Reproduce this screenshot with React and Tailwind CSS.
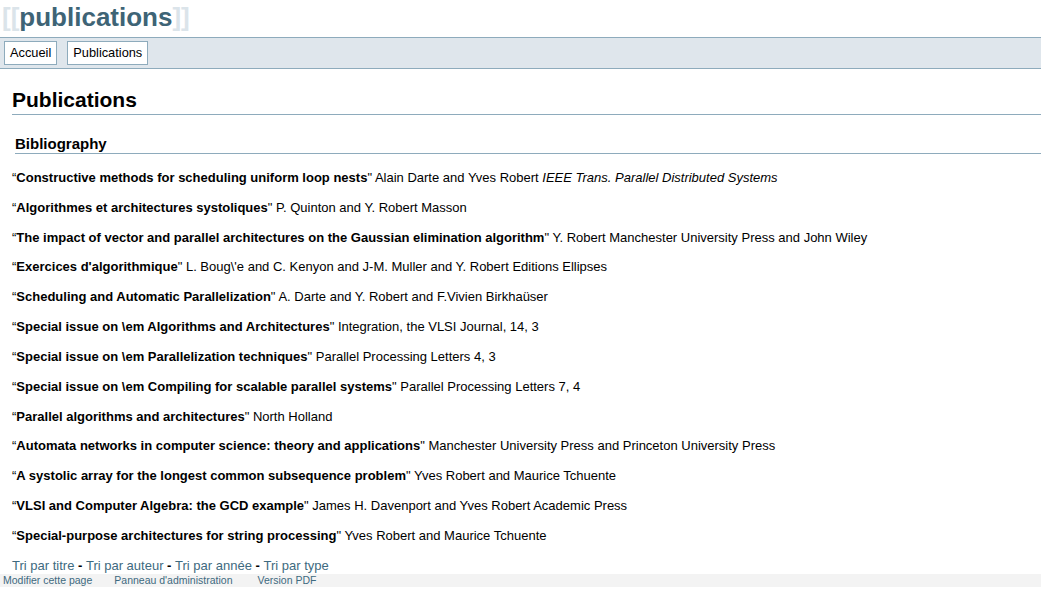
import React from "react";

const entries = [
  ["Constructive methods for scheduling uniform loop nests", " Alain Darte and Yves Robert ", "IEEE Trans. Parallel Distributed Systems"],
  ["Algorithmes et architectures systoliques", " P. Quinton and Y. Robert Masson"],
  ["The impact of vector and parallel architectures on the Gaussian elimination algorithm", " Y. Robert Manchester University Press and John Wiley"],
  ["Exercices d'algorithmique", " L. Boug\\'e and C. Kenyon and J-M. Muller and Y. Robert Editions Ellipses"],
  ["Scheduling and Automatic Parallelization", " A. Darte and Y. Robert and F.Vivien Birkhaüser"],
  ["Special issue on \\em Algorithms and Architectures", " Integration, the VLSI Journal, 14, 3"],
  ["Special issue on \\em Parallelization techniques", " Parallel Processing Letters 4, 3"],
  ["Special issue on \\em Compiling for scalable parallel systems", " Parallel Processing Letters 7, 4"],
  ["Parallel algorithms and architectures", " North Holland"],
  ["Automata networks in computer science: theory and applications", " Manchester University Press and Princeton University Press"],
  ["A systolic array for the longest common subsequence problem", " Yves Robert and Maurice Tchuente"],
  ["VLSI and Computer Algebra: the GCD example", " James H. Davenport and Yves Robert Academic Press"],
  ["Special-purpose architectures for string processing", " Yves Robert and Maurice Tchuente"],
];

export default function App() {
  return (
    <div className="w-[1041px] h-[603px] bg-white text-black overflow-hidden" style={{ fontFamily: '"Liberation Sans", Arial, sans-serif' }}>
      <div className="h-[37px] pt-[2px] pl-[2px] text-[26px] leading-[30px] font-bold text-[#3e6476]">
        <span className="text-[#dbe4ea]">[[</span>publications<span className="text-[#dbe4ea]">]]</span>
      </div>
      <div className="h-[32px] border-y border-[#8eabbc] bg-[#dfe6ec] pt-[3px] pl-[4px] flex gap-[10px]">
        <span className="h-[24px] border border-[#8eabbc] bg-white px-[5px] text-[12.8px] leading-[22px]">Accueil</span>
        <span className="h-[24px] border border-[#8eabbc] bg-white px-[5px] text-[12.8px] leading-[22px]">Publications</span>
      </div>
      <div className="pl-[12px]">
        <h1 className="mt-[20px] text-[21px] leading-[22px] font-bold pb-[3px] border-b border-[#8eabbc]">Publications</h1>
        <h2 className="mt-[21px] ml-[3px] text-[15px] leading-[15px] pb-[2px] font-bold border-b border-[#8eabbc]">Bibliography</h2>
        <div className="pt-[2px]">
          {entries.map((e, i) => (
            <p key={i} className="mt-[15px] text-[13px] leading-[14.83px] whitespace-nowrap">
              “<b>{e[0]}</b>"{e[1]}
              {e[2] && <i>{e[2]}</i>}
            </p>
          ))}
        </div>
        <div className="mt-[14.5px] text-[13px] leading-[15px] text-[#3e6a80] whitespace-nowrap">
          <span>Tri par titre</span>
          <b className="text-black"> - </b>
          <span>Tri par auteur</span>
          <b className="text-black"> - </b>
          <span>Tri par année</span>
          <b className="text-black"> - </b>
          <span>Tri par type</span>
        </div>
      </div>
      <div className="mt-[1px] h-[13px] bg-[#f3f3f3] pl-[3px] flex text-[10.5px] leading-[13px] text-[#3e6a80] whitespace-nowrap">
        <span>Modifier cette page</span>
        <span className="ml-[22px]">Panneau d'administration</span>
        <span className="ml-[25px]">Version PDF</span>
      </div>
    </div>
  );
}
